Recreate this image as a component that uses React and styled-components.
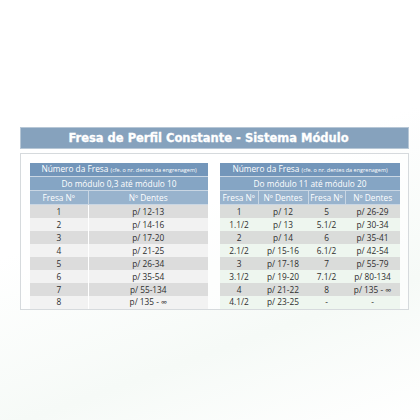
import styled, { createGlobalStyle } from 'styled-components';

const Global = createGlobalStyle`
  html, body { margin: 0; padding: 0; background: #fff; }
  body { width: 420px; height: 420px; overflow: hidden; }
`;

const Page = styled.div`
  width: 420px;
  height: 420px;
  padding: 127px 11px 0 20px;
  box-sizing: border-box;
  background: linear-gradient(160deg, #ffffff 45%, #f6faf7 75%, #ffffff 100%);
`;

const TitleBar = styled.div`
  height: 22px;
  background: #86a2bd;
  border: 1px solid #b7c7d6;
  box-sizing: border-box;
  display: flex;
  align-items: center;
  justify-content: center;
  padding-right: 12px;
  color: #fff;
  font-family: "DejaVu Sans", Verdana, sans-serif;
  font-weight: 700;
  font-size: 11.5px;
  -webkit-text-stroke: 0.3px #fff;
`;

const Box = styled.div`
  margin-top: 4px;
  height: 157px;
  border: 1px solid #d6dadd;
  box-sizing: border-box;
  background: rgba(255, 255, 255, 0.6);
  display: flex;
  gap: 12px;
  padding: 9px 0 0 9px;
`;

const Table = styled.table`
  width: ${p => p.$w}px;
  border-collapse: collapse;
  table-layout: fixed;
  font-family: "Open Sans", "Liberation Sans", sans-serif;
  font-size: 8.3px;
  color: #2e2e2e;
`;

const HeadCell = styled.td`
  height: 12.5px;
  padding: 0;
  text-align: center;
  color: #fff;
  background: ${p => p.$bg};
  border-right: ${p => (p.$div ? '1px solid #c9d6e3' : 'none')};
  border-bottom: 1px solid #c9d6e3;
  white-space: nowrap;
  overflow: hidden;
  line-height: 11px;
`;

const Small = styled.span`
  font-size: 5.5px;
`;

const Cell = styled.td`
  height: 12.5px;
  padding: 0;
  text-align: center;
  background: ${p => p.$bg};
  border-right: ${p => (p.$div ? '1px solid #ffffff' : 'none')};
  white-space: nowrap;
  line-height: 12px;
`;

const leftRows = [
  ['1', 'p/ 12-13'],
  ['2', 'p/ 14-16'],
  ['3', 'p/ 17-20'],
  ['4', 'p/ 21-25'],
  ['5', 'p/ 26-34'],
  ['6', 'p/ 35-54'],
  ['7', 'p/ 55-134'],
  ['8', 'p/ 135 - ∞'],
];

const rightRows = [
  ['1', 'p/ 12', '5', 'p/ 26-29'],
  ['1.1/2', 'p/ 13', '5.1/2', 'p/ 30-34'],
  ['2', 'p/ 14', '6', 'p/ 35-41'],
  ['2.1/2', 'p/ 15-16', '6.1/2', 'p/ 42-54'],
  ['3', 'p/ 17-18', '7', 'p/ 55-79'],
  ['3.1/2', 'p/ 19-20', '7.1/2', 'p/ 80-134'],
  ['4', 'p/ 21-22', '8', 'p/ 135 - ∞'],
  ['4.1/2', 'p/ 23-25', '-', '-'],
];

const TOP = '#7396ba';
const MID = '#85a5c4';
const COL = '#98b3cd';

export default function App() {
  return (
    <Page>
      <Global />
      <TitleBar>Fresa de Perfil Constante - Sistema Módulo</TitleBar>
      <Box>
        <Table $w={178}>
          <colgroup>
            <col style={{ width: 58 }} />
            <col style={{ width: 120 }} />
          </colgroup>
          <tbody>
            <tr>
              <HeadCell colSpan={2} $bg={TOP}>
                Número da Fresa <Small>(cfe. o nr. dentes da engrenagem)</Small>
              </HeadCell>
            </tr>
            <tr>
              <HeadCell colSpan={2} $bg={MID}>Do módulo 0,3 até módulo 10</HeadCell>
            </tr>
            <tr>
              <HeadCell $bg={COL} $div>Fresa Nº</HeadCell>
              <HeadCell $bg={COL}>Nº Dentes</HeadCell>
            </tr>
            {leftRows.map((r, i) => (
              <tr key={i}>
                <Cell $bg={i % 2 ? '#f2f2f2' : '#dcdcdc'} $div>{r[0]}</Cell>
                <Cell $bg={i % 2 ? '#f2f2f2' : '#dcdcdc'}>{r[1]}</Cell>
              </tr>
            ))}
          </tbody>
        </Table>
        <Table $w={180}>
          <colgroup>
            <col style={{ width: 38 }} />
            <col style={{ width: 50 }} />
            <col style={{ width: 37 }} />
            <col style={{ width: 55 }} />
          </colgroup>
          <tbody>
            <tr>
              <HeadCell colSpan={4} $bg={TOP}>
                Número da Fresa <Small>(cfe. o nr. dentes da engrenagem)</Small>
              </HeadCell>
            </tr>
            <tr>
              <HeadCell colSpan={4} $bg={MID}>Do módulo 11 até módulo 20</HeadCell>
            </tr>
            <tr>
              <HeadCell $bg={COL} $div>Fresa Nº</HeadCell>
              <HeadCell $bg={COL} $div>Nº Dentes</HeadCell>
              <HeadCell $bg={COL} $div>Fresa Nº</HeadCell>
              <HeadCell $bg={COL}>Nº Dentes</HeadCell>
            </tr>
            {rightRows.map((r, i) => (
              <tr key={i}>
                {r.map((c, j) => (
                  <Cell key={j} $bg={i % 2 ? '#eef6ef' : '#dadcda'}>{c}</Cell>
                ))}
              </tr>
            ))}
          </tbody>
        </Table>
      </Box>
    </Page>
  );
}
